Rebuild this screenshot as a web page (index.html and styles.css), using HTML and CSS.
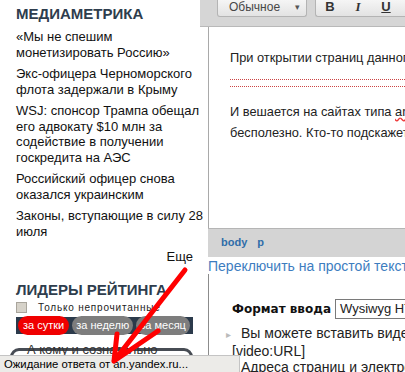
FILE: index.html
```html
<!DOCTYPE html>
<html lang="ru">
<head>
    <meta charset="UTF-8">
    <meta name="viewport" content="width=device-width, initial-scale=1.0">
    <title>Медиаметрика</title>
    <link rel="stylesheet" href="styles.css">
</head>
<body>
    <div class="page">
        <!-- Левая колонка -->
        <div class="sidebar">
            <h2 class="block-title">Медиаметрика</h2>
            <ul class="news">
                <li>«Мы не спешим<br>монетизировать Россию»</li>
                <li>Экс-офицера Черноморского<br>флота задержали в Крыму</li>
                <li>WSJ: спонсор Трампа обещал<br>его адвокату $10 млн за<br>содействие в получении<br>госкредита на АЭС</li>
                <li>Российский офицер снова<br>оказался украинским</li>
                <li>Законы, вступающие в силу 28<br>июля</li>
            </ul>
            <div class="more">Еще</div>

            <h2 class="block-title leaders-title">Лидеры рейтинга</h2>
            <div class="unread"><span class="check"></span>Только непрочитанные</div>
            <div class="tabs">
                <span class="tab active">за сутки</span>
                <span class="tab">за неделю</span>
                <span class="tab">за месяц</span>
            </div>
            <div class="top-item">А кому и сознательно</div>
            <div class="top-box"></div>
        </div>

        <!-- Редактор -->
        <div class="content">
            <div class="toolbar">
                <div class="combo"><span>Обычное</span><span class="combo-arrow">▾</span></div>
                <div class="buttons">
                    <span class="btn btn-b">B</span>
                    <span class="btn btn-i">I</span>
                    <span class="btn btn-u">U</span>
                </div>
            </div>
            <div class="editor">
                <p class="first">При открытии страниц данного сайта появляется окно</p>
                <div class="dots"></div>
                <p class="second">И вешается на сайтах типа <span class="typo">an.yandex.ru</span>, блокировка<br>бесполезно. Кто-то подскажет, что делать?</p>
            </div>
            <div class="path"><span>body</span><span>p</span></div>
            <a class="switch" href="#">Переключить на простой текстовый редактор</a>
            <div class="format">
                <div class="format-row">
                    <span class="format-label">Формат ввода</span>
                    <span class="select">Wysiwyg HTML</span>
                </div>
                <ul class="tips">
                    <li>Вы можете вставить видео, используя<br>[video:URL]</li>
                    <li>Адреса страниц и электронной почты</li>
                </ul>
            </div>
        </div>
    </div>

    <div class="status">Ожидание ответа от an.yandex.ru...</div>

    <svg class="arrow" width="405" height="372" viewBox="0 0 405 372">
        <path d="M185 270 L114 361 M114 361 L117 334 M114 361 L158 331" fill="none" stroke="#f00" stroke-width="5" stroke-linecap="round" stroke-linejoin="round"/>
    </svg>
</body>
</html>
```

FILE: styles.css
```css
body {
    margin: 0;
    width: 405px;
    height: 372px;
    overflow: hidden;
    position: relative;
    background: #fff;
    color: #111;
    font-family: "Liberation Sans", Arial, sans-serif;
}
.page {
    display: flex;
    height: 372px;
    overflow: hidden;
}
.sidebar {
    width: 200px;
    flex: none;
    padding: 5px 7px 0 16px;
    box-sizing: border-box;
}
.block-title {
    margin: 0;
    font-size: 15px;
    line-height: 18px;
    font-weight: bold;
    text-transform: uppercase;
    color: #2e3d4d;
    white-space: nowrap;
}
.news {
    list-style: none;
    margin: 6px 0 0;
    padding: 0;
    font-size: 13px;
    line-height: 15.5px;
}
.news li {
    margin-bottom: 6px;
    white-space: nowrap;
}
.news li:last-child {
    margin-bottom: 0;
}
.more {
    margin-top: 10px;
    text-align: right;
    font-size: 13px;
    line-height: 16px;
}
.leaders-title {
    margin-top: 16px;
}
.unread {
    display: flex;
    align-items: center;
    height: 13px;
    margin-top: 2px;
    font-size: 10px;
    letter-spacing: 0.8px;
    color: #222;
    white-space: nowrap;
}
.check {
    width: 11px;
    height: 11px;
    margin-right: 11px;
    box-sizing: border-box;
    border: 1px solid #a9a59c;
    background: #d6d2c9;
}
.tabs {
    display: flex;
    align-items: center;
    gap: 3px;
    width: 177px;
    height: 17px;
    margin-top: 3px;
    padding-left: 2px;
    box-sizing: border-box;
    background: #2b3a4b;
}
.tab {
    height: 19px;
    line-height: 19px;
    padding: 0 4px;
    border-radius: 10px;
    background: #7d7d7d;
    color: #fff;
    font-size: 11px;
    white-space: nowrap;
}
.tab.active {
    padding: 0 5px;
    background: #f00000;
}
.top-item {
    margin-top: 8px;
    padding-left: 11px;
    font-size: 13px;
    line-height: 15px;
    color: #333;
    white-space: nowrap;
}
.top-box {
    width: 183px;
    height: 24px;
    margin: -9px 0 0 -6px;
    box-sizing: border-box;
    border: 3px solid #474c54;
    border-radius: 9px;
}

/* редактор */
.content {
    flex: 1;
    min-width: 0;
    overflow: hidden;
}
.toolbar {
    display: flex;
    align-items: flex-start;
    height: 26px;
    padding-left: 17px;
    background: #d6d6d6;
    border-bottom: 1px solid #b9b9b9;
}
.combo {
    display: flex;
    align-items: center;
    justify-content: space-between;
    width: 90px;
    height: 17px;
    padding: 0 6px 2px 11px;
    box-sizing: border-box;
    border: 1px solid #b4b4b4;
    border-top: none;
    border-radius: 0 0 3px 3px;
    background: linear-gradient(#f5f5f5, #e3e3e3);
    font-size: 12px;
    color: #474747;
}
.combo-arrow {
    font-size: 9px;
    color: #555;
}
.buttons {
    display: flex;
    flex: 1;
    height: 17px;
    margin-left: 8px;
    box-sizing: border-box;
    border: 1px solid #b4b4b4;
    border-top: none;
    border-right: none;
    border-radius: 0 0 0 3px;
    background: linear-gradient(#f5f5f5, #e3e3e3);
}
.btn {
    width: 28px;
    text-align: center;
    font-size: 13px;
    line-height: 14px;
    font-weight: bold;
    color: #333;
}
.btn-i {
    font-family: "Liberation Serif", serif;
    font-style: italic;
}
.btn-u {
    text-decoration: underline;
}
.editor {
    height: 201px;
    margin-left: 8px;
    padding: 20px 0 0 21px;
    box-sizing: border-box;
    border-left: 1px solid #a9a9a9;
    font-size: 12.8px;
    color: #222;
    white-space: nowrap;
    overflow: hidden;
}
.editor p {
    margin: 0;
}
.first {
    line-height: 22px;
}
.dots {
    height: 6px;
    margin-top: 10px;
    border-top: 1px dotted #c44;
    border-bottom: 1px dotted #c44;
}
.editor .second {
    margin-top: 14px;
    line-height: 21px;
}
.typo {
    text-decoration: underline wavy #e33;
}
.path {
    height: 29px;
    margin-left: 8px;
    padding: 7px 0 0 13px;
    box-sizing: border-box;
    border-top: 1px solid #b5b5b5;
    background: #d4d4d4;
    font-size: 11px;
    line-height: 13px;
    font-weight: bold;
    color: #2f6da9;
}
.path span {
    margin-right: 10px;
}
.switch {
    display: block;
    margin: 1px 0 0 8px;
    font-size: 14px;
    line-height: 16px;
    color: #3d7dbf;
    text-decoration: none;
    white-space: nowrap;
}
.format {
    margin-left: 8px;
    padding: 25px 0 20px 23px;
    border-left: 1px solid #8c8c8c;
    white-space: nowrap;
}
.format-row {
    display: flex;
    align-items: center;
}
.format-label {
    font-family: "DejaVu Sans", Verdana, sans-serif;
    font-size: 12px;
    font-weight: bold;
    color: #111;
}
.select {
    height: 20px;
    margin-left: 4px;
    padding: 0 40px 0 4px;
    box-sizing: border-box;
    border: 1px solid #7a7a7a;
    font-size: 13px;
    line-height: 18px;
    color: #222;
}
.tips {
    list-style: none;
    margin: 6px 0 0;
    padding: 0;
    font-size: 14px;
    line-height: 16px;
    color: #222;
}
.tips li::before {
    content: "▸";
    display: inline-block;
    width: 15px;
    margin-left: -6px;
    font-size: 10px;
    color: #bbb;
}

/* строка состояния браузера */
.status {
    position: absolute;
    left: 0;
    bottom: 0;
    width: 240px;
    height: 17px;
    padding-left: 4px;
    box-sizing: border-box;
    border-top: 1px solid #c4c4c4;
    border-right: 1px solid #c4c4c4;
    background: #ecebe8;
    font-size: 11.3px;
    line-height: 16px;
    color: #000;
    white-space: nowrap;
}
.arrow {
    position: absolute;
    left: 0;
    top: 0;
    pointer-events: none;
}
```
